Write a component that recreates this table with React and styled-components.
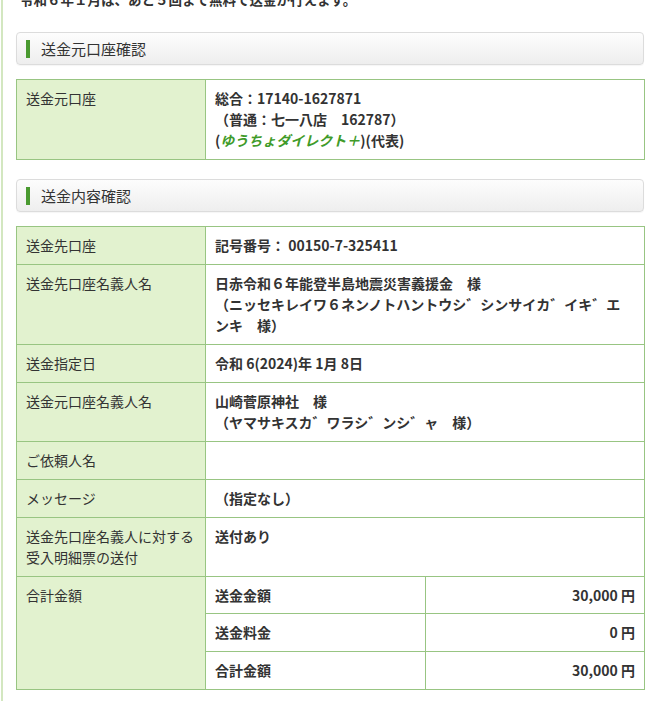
import React from "react";
import styled, { createGlobalStyle } from "styled-components";

const GlobalStyle = createGlobalStyle`
  html, body { margin: 0; padding: 0; background: #fff; }
  body { font-family: "Noto Sans CJK JP", "Noto Sans", sans-serif; color: #333; }
`;

const Page = styled.div`
  width: 659px;
  height: 701px;
  overflow: hidden;
  box-sizing: border-box;
  margin-left: 1px;
  border-left: 2px solid #d3e7c0;
  padding: 0 16px 0 13px;
  display: flex;
  flex-direction: column;
`;

const Notice = styled.p`
  margin: -11px 0 0 4px;
  font-size: 13.5px;
  font-weight: 700;
  line-height: 20px;
  color: #333;
`;

const SectionHeader = styled.h2`
  margin: ${(p) => p.$top}px 0 14px;
  box-sizing: border-box;
  height: 33px;
  display: flex;
  align-items: center;
  gap: 11px;
  padding: 0 9px;
  border: 1px solid #dcdcdc;
  border-radius: 4px;
  background: linear-gradient(#fdfdfd, #eeeeee);
  box-shadow: 0 1px 1px rgba(0, 0, 0, 0.04);
  font-size: 15px;
  font-weight: 400;
  color: #333;
  &::before {
    content: "";
    display: block;
    width: 4px;
    height: 18px;
    background: #4a9a30;
  }
`;

const Table = styled.table`
  width: 628px;
  border-collapse: collapse;
  table-layout: fixed;
  font-size: 14px;
  line-height: 21px;
`;

const Label = styled.th`
  background: #e2f2cf;
  border: 1px solid #98c582;
  padding: 8px 9px 8px 9px;
  font-weight: 400;
  text-align: left;
  vertical-align: top;
  color: #333;
`;

const Value = styled.td`
  border: 1px solid #98c582;
  padding: ${(p) => (p.$tight ? "8px 9px 7px" : "8px 9px")};
  font-weight: 700;
  text-align: ${(p) => (p.$right ? "right" : "left")};
  vertical-align: top;
  color: #333;
`;

const Brand = styled.span`
  color: #3f9b2a;
  font-style: italic;
`;

const Section = ({ title, top, children }) => (
  <>
    <SectionHeader $top={top}>{title}</SectionHeader>
    <Table>
      <colgroup>
        <col style={{ width: 189 }} />
        <col style={{ width: 220 }} />
        <col style={{ width: 219 }} />
      </colgroup>
      <tbody>{children}</tbody>
    </Table>
  </>
);

const Row = ({ label, children, tight }) => (
  <tr>
    <Label>{label}</Label>
    <Value colSpan={2} $tight={tight}>
      {children}
    </Value>
  </tr>
);

const amounts = [
  ["送金金額", "30,000 円"],
  ["送金料金", "0 円"],
  ["合計金額", "30,000 円"],
];

export default function App() {
  return (
    <>
      <GlobalStyle />
      <Page>
        <Notice>令和６年１月は、あと５回まで無料で送金が行えます。</Notice>
        <Section title="送金元口座確認" top={23}>
          <Row label="送金元口座">
            総合：17140-1627871
            <br />
            （普通：七一八店　162787）
            <br />
            (<Brand>ゆうちょダイレクト＋</Brand>)(代表)
          </Row>
        </Section>
        <Section title="送金内容確認" top={19}>
          <Row label="送金先口座" tight>
            記号番号： 00150-7-325411
          </Row>
          <Row label="送金先口座名義人名">
            日赤令和６年能登半島地震災害義援金　様
            <br />
            （ニッセキレイワ６ネンノトハントウシ゛シンサイカ゛イキ゛エ
            <br />
            ンキ　様）
          </Row>
          <Row label="送金指定日">令和 6(2024)年 1月 8日</Row>
          <Row label="送金元口座名義人名">
            山崎菅原神社　様
            <br />
            （ヤマサキスカ゛ワラシ゛ンシ゛ャ　様）
          </Row>
          <Row label="ご依頼人名">{"\u00a0"}</Row>
          <Row label="メッセージ">（指定なし）</Row>
          <Row
            label={
              <>
                送金先口座名義人に対する
                <br />
                受入明細票の送付
              </>
            }
          >
            送付あり
          </Row>
          {amounts.map(([name, amount], i) => (
            <tr key={name}>
              {i === 0 && <Label rowSpan={3}>合計金額</Label>}
              <Value $tight={i === 0}>{name}</Value>
              <Value $right $tight={i === 0}>
                {amount}
              </Value>
            </tr>
          ))}
        </Section>
      </Page>
    </>
  );
}
